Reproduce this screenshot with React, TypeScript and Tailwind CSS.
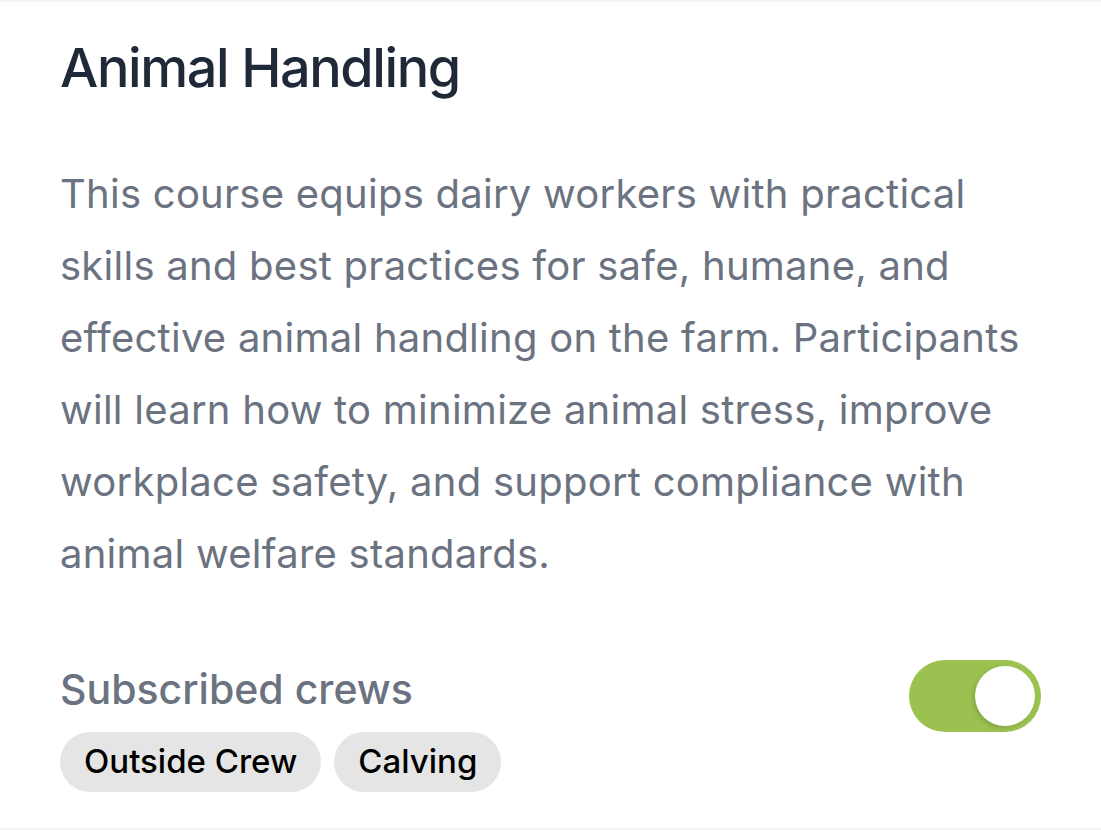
import React from "react";

export default function App() {
  return (
    <div
      className="w-[1101px] h-[830px] bg-white border-t-2 border-b-2 border-[#f3f4f6] flex flex-col px-[60px] pt-[26px]"
      style={{ fontFamily: "Inter, 'Noto Sans', sans-serif" }}
    >
      <h1 className="text-[54px] leading-[80px] font-medium text-[#1f2937] tracking-[-1.4px]">
        Animal Handling
      </h1>
      <p className="mt-[50px] mr-[-25px] text-[40px] leading-[72px] text-[#6b7280] tracking-[0.25px]">
        This course equips dairy workers with practical skills and best practices for safe, humane, and effective animal handling on the farm. Participants will learn how to minimize animal stress, improve workplace safety, and support compliance with animal welfare standards.
      </p>
      <div className="mt-[71px] flex items-start justify-between">
        <div className="flex flex-col">
          <div className="text-[41px] leading-[56px] font-medium text-[#6b7280]">Subscribed crews</div>
          <div className="mt-[15px] flex gap-[13px]">
            <span className="h-[60px] px-[24px] rounded-full bg-[#e5e5e5] text-black text-[33px] font-medium flex items-center">
              Outside Crew
            </span>
            <span className="h-[60px] px-[24px] rounded-full bg-[#e5e5e5] text-black text-[33px] font-medium flex items-center">
              Calving
            </span>
          </div>
        </div>
        <div className="mt-[-1px] w-[132px] h-[72px] rounded-full bg-[#9bc250] p-[6px] flex justify-end">
          <div className="w-[60px] h-[60px] rounded-full bg-white shadow-[-2px_2px_4px_rgba(0,0,0,0.15)]" />
        </div>
      </div>
    </div>
  );
}
